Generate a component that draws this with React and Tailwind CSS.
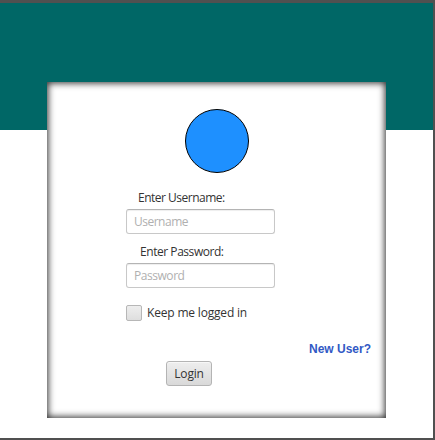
function Field({ label, placeholder, type, labelClass, inputClass }) {
  return (
    <label className="block w-[149px]">
      <span className={`block h-[22px] whitespace-nowrap leading-[22px] ${labelClass}`}>{label}</span>
      <input
        type={type}
        placeholder={placeholder}
        className={`block h-[25px] w-full rounded-[3px] border border-[#c8c8c8] border-t-[#b4b4b4] bg-white px-[7px] shadow-[inset_0_1px_1px_#eeeeee] outline-none placeholder:text-[#b0b0b0] ${inputClass}`}
      />
    </label>
  );
}

export default function App() {
  return (
    <div className="h-[440px] w-[435px] overflow-hidden border-t-[3px] border-r-2 border-b-2 border-[#505050] bg-[linear-gradient(#006766_127px,#ffffff_127px)] pt-[79px] pl-[47px] font-['Open_Sans','Noto_Sans',sans-serif] text-[12px] text-[#333333]">
      <main className="flex h-[336px] w-[339px] flex-col bg-white pt-[27px] pl-[79px] shadow-[inset_0_0_7px_1px_rgba(0,0,0,0.85)]">
        <div className="ml-[59px] size-16 shrink-0 rounded-full border border-black bg-[#1e90ff]" />
        <div className="mt-[14px]">
          <Field label="Enter Username:" placeholder="Username" type="text" labelClass="ml-3 tracking-[-0.5px]" inputClass="tracking-[-0.5px]" />
        </div>
        <div className="mt-[7px]">
          <Field label="Enter Password:" placeholder="Password" type="password" labelClass="ml-[14px] tracking-[-0.45px]" inputClass="tracking-[-0.45px]" />
        </div>
        <label className="mt-[17px] flex h-4 items-center gap-[5px] whitespace-nowrap">
          <input
            type="checkbox"
            className="size-4 appearance-none rounded-[2px] border border-[#b7b7b7] bg-linear-to-b from-[#eeeeee] to-[#dedede]"
          />
          <span className="tracking-[-0.18px]">Keep me logged in</span>
        </label>
        <a className="mt-5 mr-[15px] h-4 self-end whitespace-nowrap font-['Liberation_Sans',Arial,sans-serif] text-[12px] leading-4 font-bold text-[#3159c5]">
          New User?
        </a>
        <button className="mt-1 ml-10 h-[25px] w-[46px] rounded-[3px] border border-[#b4b4b4] bg-linear-to-b from-[#eeeeee] to-[#d9d9d9] tracking-[-0.2px] shadow-[inset_0_1px_0_#f7f7f7]">
          Login
        </button>
      </main>
    </div>
  );
}
